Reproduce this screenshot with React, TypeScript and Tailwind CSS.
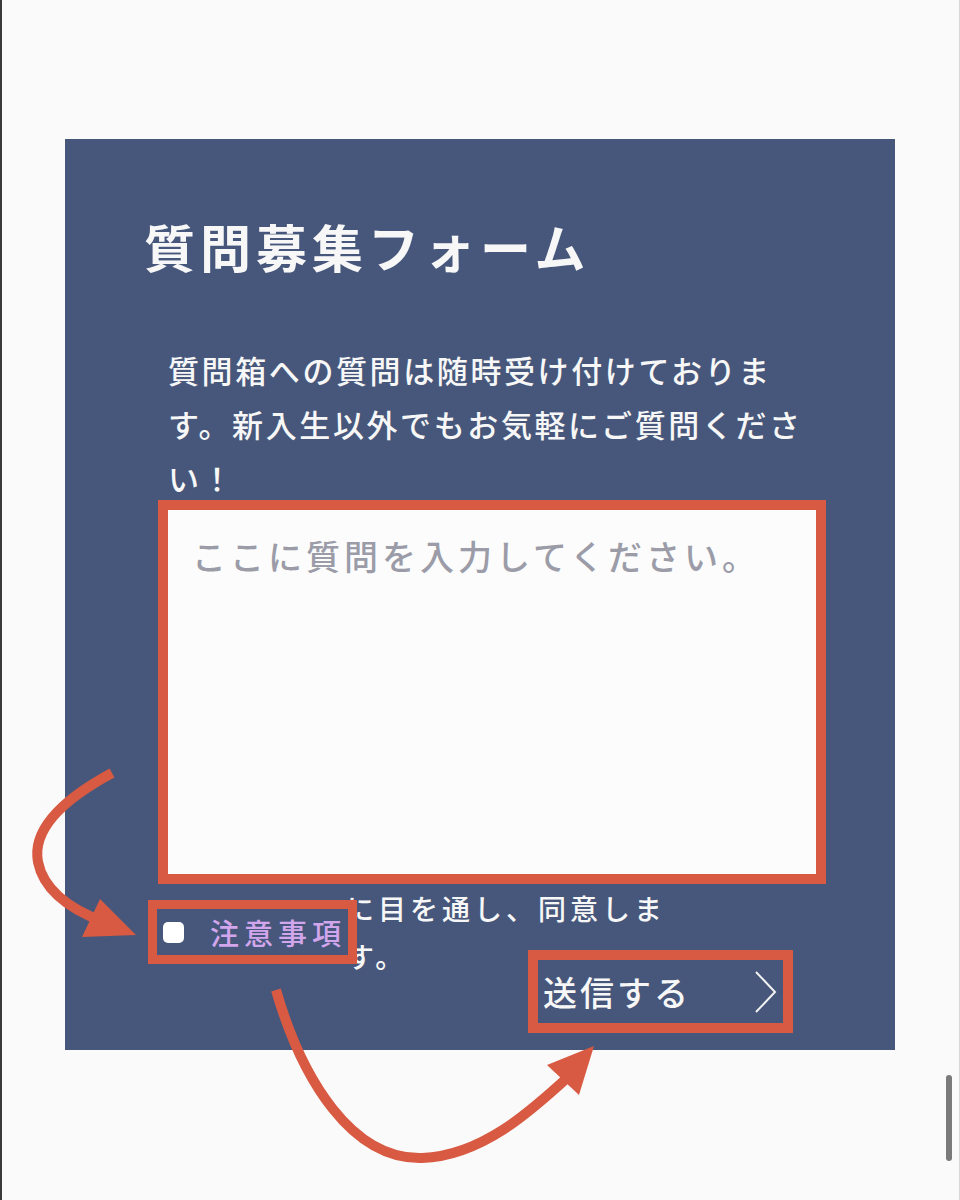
import React from "react";

const jp = '"Noto Sans CJK JP", "Noto Sans", sans-serif';

// Red hand-drawn annotation arrows laid over the screenshot
function Arrows() {
  return (
    <svg
      className="pointer-events-none absolute left-0 top-0"
      width="960"
      height="1200"
      viewBox="0 0 960 1200"
    >
      <g fill="none" stroke="#d85a42" strokeWidth="10" strokeLinecap="butt">
        <path d="M110 773 C 60 800, 30 830, 36 862 C 42 892, 70 910, 102 922" />
        <path d="M274 990 C 300 1080, 350 1160, 420 1158 C 480 1156, 530 1110, 565 1078" />
      </g>
      <g fill="#d85a42">
        <polygon points="80,937 98,899 134,935" />
        <polygon points="545,1065 592,1046 577,1095" />
      </g>
    </svg>
  );
}

export default function App() {
  return (
    <div
      className="relative h-[1200px] w-[960px] overflow-hidden border-l-2 border-r border-l-[#3a3a3a] border-r-[#d8d8d8] bg-[#fafafa]"
      style={{ fontFamily: jp }}
    >
      <div className="ml-[63px] mt-[139px] flex h-[911px] w-[830px] flex-col bg-[#47577b] pt-[82px] text-[#f7f7f7]">
        {/* Title */}
        <h1 className="ml-[79px] text-[51px] font-bold leading-none tracking-[5px]">
          質問募集フォーム
        </h1>

        {/* Description */}
        <p className="ml-[103px] mt-[71px] text-[31px] font-medium leading-[54px] tracking-[2.6px]">
          質問箱への質問は随時受け付けておりま
          <br />
          す。新入生以外でもお気軽にご質問くださ
          <br />
          い！
        </p>

        {/* Question textarea, outlined in red */}
        <div className="ml-[93px] mt-[-5px] h-[384px] w-[668px] border-[10px] border-[#d85a42] bg-[#fcfcfc]">
          <textarea
            className="h-full w-full resize-none bg-transparent px-[24px] pt-[24px] text-[34px] font-medium leading-[1.3] tracking-[4px] text-[#333] outline-none placeholder:text-[#9b9ca8]"
            style={{ fontFamily: jp }}
            placeholder="ここに質問を入力してください。"
          />
        </div>

        {/* Agreement row */}
        <div className="ml-[83px] flex items-center">
          <label className="relative z-10 flex h-[64px] w-[209px] items-center border-[9px] border-[#d85a42] bg-[#47577b] pl-[6px]">
            <input type="checkbox" className="sr-only" />
            <span className="h-[21px] w-[21px] rounded-[5px] bg-white" />
            <span className="ml-[26px] text-[29px] font-medium leading-none tracking-[5px] text-[#d2a6ec]">
              注意事項
            </span>
          </label>
          <div className="ml-[-11px] text-[28px] font-medium leading-[48px] tracking-[4px]">
            <div>に目を通し、同意しま</div>
            <div>す。</div>
          </div>
        </div>

        {/* Submit button */}
        <button className="ml-[463px] mt-[-30px] flex h-[83px] w-[265px] items-center justify-between border-[10px] border-[#d85a42] pl-[5px] pr-[5px] text-[34px] font-medium leading-none tracking-[3px] text-[#f7f7f7]">
          <span style={{ fontFamily: jp }}>送信する</span>
          <svg width="24" height="42" viewBox="0 0 24 42" fill="none">
            <path d="M2 1 L21 21 L2 41" stroke="#f2f2f2" strokeWidth="2" />
          </svg>
        </button>
      </div>

      {/* Scrollbar */}
      <div className="absolute left-[944px] top-[1075px] h-[86px] w-[6px] rounded-full bg-[#7a7a7a]" />

      <Arrows />
    </div>
  );
}
